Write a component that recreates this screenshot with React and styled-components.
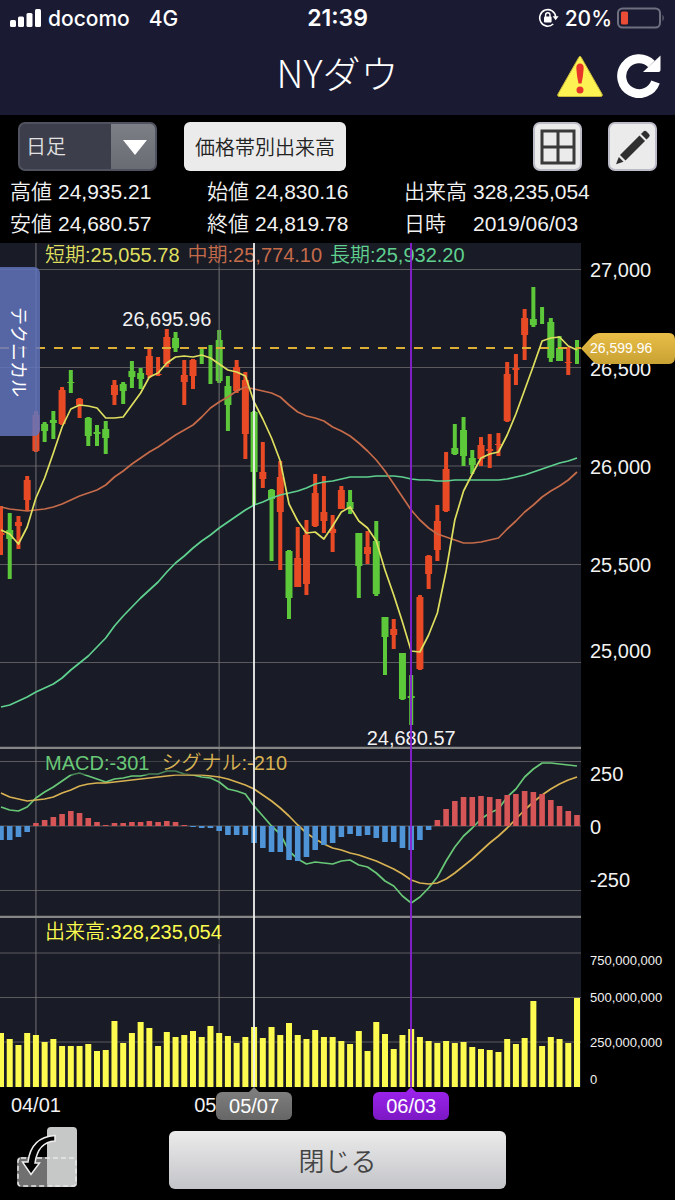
import React, { useState } from "react";
import styled, { createGlobalStyle } from "styled-components";

const color = {
  header: "#1a1b33",
  plot: "#191b26",
  grid: "#5b5b5e",
  divider: "#868686",
  up: "#e94a26",
  down: "#5cc83a",
  short: "#dfdf5f",
  mid: "#c66b4a",
  long: "#5fd08f",
  macd: "#68c877",
  signal: "#d8b252",
  plus: "#d65557",
  minus: "#4f94d6",
  volume: "#fdfb4f",
  current: "#dcae35",
  cursorA: "#f0f0f0",
  cursorB: "#8a1fd6",
};

const GlobalStyle = createGlobalStyle`
  * {
    box-sizing: border-box;
  }

  body {
    margin: 0;
    background: #000;
    color: #f2f2f2;
    font-family: "Liberation Sans", "Noto Sans CJK JP", sans-serif;
    font-size: 20px;
    font-weight: 350;
  }

  button,
  select {
    font: inherit;
    margin: 0;
    cursor: pointer;
  }

  svg {
    display: block;
  }
`;

/*
 * plot data - y values share one vertical axis that runs through all panes
 */

const COUNT = 67;
const PLOT_WIDTH = 581;
const STEP = (PLOT_WIDTH - 5) / (COUNT - 1);
const xOf = (i) => 1 + i * STEP;
const percentOf = (i) => `${(xOf(i) / PLOT_WIDTH) * 100}%`;

// [direction, high, body top, body bottom, low]
const candles = [
  ["u", 506, 533, 535, 555], ["d", 513, 530, 539, 579], ["u", 516, 522, 526, 549],
  ["u", 476, 480, 500, 511], ["u", 411, 415, 451, 452], ["d", 422, 424, 431, 442],
  ["d", 411, 420, 423, 439], ["u", 387, 390, 424, 425], ["d", 370, 382, 383, 393],
  ["u", 398, 399, 405, 418], ["d", 417, 418, 436, 446], ["d", 425, 432, 434, 446],
  ["d", 421, 429, 438, 454], ["u", 380, 385, 395, 405], ["d", 382, 384, 391, 404],
  ["d", 361, 371, 377, 388], ["d", 368, 373, 379, 389], ["u", 348, 356, 375, 378],
  ["u", 357, 374, 375, 376], ["u", 329, 337, 364, 367], ["d", 332, 338, 348, 352],
  ["u", 360, 375, 382, 405], ["u", 359, 360, 376, 389], ["d", 348, 349, 349, 364],
  ["d", 345, 349, 349, 384], ["d", 330, 340, 381, 383], ["d", 376, 386, 405, 431],
  ["u", 360, 367, 391, 393], ["u", 372, 380, 434, 459], ["d", 411, 412, 472, 505],
  ["u", 442, 472, 479, 488], ["d", 489, 490, 499, 561], ["u", 461, 477, 512, 570],
  ["d", 550, 551, 598, 619], ["u", 527, 558, 587, 587], ["u", 520, 535, 584, 595],
  ["u", 474, 493, 526, 527], ["u", 476, 512, 521, 533], ["u", 515, 529, 533, 552],
  ["u", 486, 490, 509, 509], ["d", 490, 502, 509, 514], ["d", 533, 533, 566, 598],
  ["u", 531, 547, 554, 564], ["d", 521, 541, 594, 596], ["d", 617, 617, 637, 675],
  ["u", 619, 629, 635, 649], ["d", 653, 653, 699, 700], ["d", 675, 696, 698, 725],
  ["u", 595, 597, 669, 670], ["u", 555, 556, 574, 589], ["u", 505, 521, 550, 561],
  ["u", 452, 469, 511, 512], ["d", 424, 448, 454, 455], ["d", 417, 430, 456, 466],
  ["d", 450, 458, 465, 474], ["u", 437, 445, 459, 466], ["u", 434, 449, 451, 468],
  ["u", 433, 444, 445, 456], ["u", 362, 374, 421, 422], ["u", 354, 368, 370, 385],
  ["u", 309, 318, 335, 360], ["d", 287, 319, 325, 327], ["d", 307, 323, 323, 324],
  ["d", 318, 322, 358, 362], ["d", 336, 348, 361, 361], ["u", 347, 362, 363, 375],
  ["d", 340, 348, 348, 364],
];

const shortLine = [
  530, 534, 544, 527, 498, 478, 453, 427, 409, 405, 406, 408, 418, 418, 417, 405,
  393, 377, 373, 363, 357, 356, 357, 355, 358, 364, 370, 372, 376, 402, 419, 438,
  461, 504, 521, 533, 532, 539, 526, 512, 507, 521, 528, 541, 570, 595, 622, 651,
  652, 635, 613, 571, 520, 491, 474, 458, 454, 452, 435, 414, 390, 366, 341, 338,
  337, 346, 350,
];

const midLine = [
  507, 509, 510, 511, 510, 509, 507, 504, 500, 496, 493, 490, 485, 477, 471, 464,
  458, 452, 447, 441, 435, 430, 425, 417, 408, 402, 397, 391, 387, 389, 391, 393,
  397, 405, 412, 416, 418, 421, 427, 431, 436, 443, 451, 460, 471, 484, 497, 510,
  520, 528, 534, 537, 540, 543, 543, 542, 540, 538, 529, 521, 512, 505, 497, 491,
  486, 480, 472,
];

const longLine = [
  707, 705, 701, 697, 692, 688, 684, 678, 670, 663, 656, 647, 638, 626, 616, 607,
  598, 590, 582, 572, 563, 556, 548, 541, 535, 528, 522, 516, 510, 505, 502, 498,
  495, 493, 491, 488, 484, 482, 481, 479, 477, 477, 477, 476, 476, 476, 477, 479,
  480, 480, 481, 481, 480, 480, 480, 480, 480, 480, 479, 477, 475, 472, 469, 466,
  463, 461, 458,
];

const macdLine = [
  807, 810, 811, 807, 798, 792, 787, 781, 775, 773, 776, 779, 782, 779, 778, 776,
  776, 774, 774, 771, 771, 774, 775, 777, 778, 782, 789, 791, 794, 806, 816, 826,
  834, 851, 859, 864, 862, 863, 864, 861, 860, 865, 867, 873, 881, 886, 896, 903,
  897, 888, 877, 861, 847, 836, 828, 819, 813, 809, 797, 789, 777, 769, 763, 763,
  764, 765, 766,
];

const signalLine = [
  793, 797, 799, 801, 800, 799, 797, 793, 790, 786, 784, 783, 783, 782, 781, 780,
  779, 778, 777, 776, 775, 775, 775, 775, 776, 777, 779, 782, 785, 789, 795, 801,
  808, 816, 825, 833, 839, 844, 848, 850, 853, 855, 858, 861, 865, 869, 874, 880,
  883, 884, 883, 879, 873, 866, 859, 851, 843, 836, 828, 819, 810, 802, 795, 789,
  784, 780, 777,
];

const histogram = [
  -14, -14, -11, -6, 3, 6, 9, 12, 15, 13, 8, 4, 1, 3, 3, 4, 4, 5, 4, 5, 4, 1, -1,
  -2, -2, -5, -9, -9, -9, -17, -22, -26, -26, -34, -35, -31, -24, -19, -17, -11,
  -8, -10, -9, -12, -16, -16, -22, -24, -14, -4, 6, 17, 25, 29, 29, 30, 29, 27,
  31, 32, 35, 34, 32, 26, 20, 15, 11,
];

const volumes = [
  54, 48, 42, 54, 52, 45, 48, 41, 41, 41, 43, 36, 37, 66, 44, 54, 65, 59, 41, 55,
  50, 52, 56, 50, 61, 54, 51, 44, 50, 60, 49, 60, 52, 64, 52, 48, 57, 50, 50, 46,
  43, 56, 36, 65, 53, 38, 52, 58, 50, 46, 44, 46, 44, 45, 40, 38, 37, 35, 48, 43,
  49, 86, 41, 50, 48, 44, 89,
];

const quotes = [
  ["高値", "24,935.21"],
  ["始値", "24,830.16"],
  ["出来高", "328,235,054"],
  ["安値", "24,680.57"],
  ["終値", "24,819.78"],
  ["日時", "2019/06/03"],
];

const monthLines = [
  { index: 4, label: "04/01" },
  { index: 25, label: "05/01" },
];

const cursors = [
  { index: 29, label: "05/07", line: color.cursorA, from: "#7d7d7d", to: "#666" },
  { index: 47, label: "06/03", line: color.cursorB, from: "#9a22ea", to: "#7c18c4" },
];

/*
 * header
 */

const Page = styled.div`
  min-height: 100vh;
  display: flex;
  flex-direction: column;
`;

const Header = styled.header`
  background: ${color.header};
  height: 115px;
`;

const StatusBar = styled.div`
  display: grid;
  grid-template-columns: 1fr auto 1fr;
  align-items: center;
  height: 36px;
  padding: 0 10px;
  color: #fff;
  font-family: Inter, sans-serif;
  font-size: 21px;
  font-weight: 500;
`;

const StatusGroup = styled.div`
  display: flex;
  align-items: center;
  justify-content: ${({ $end }) => ($end ? "flex-end" : "flex-start")};
  gap: ${({ $end }) => ($end ? "5px" : "7px")};
`;

const Network = styled.span`
  margin-left: 12px;
`;

const Clock = styled.span`
  font-size: 23px;
  font-weight: 600;
`;

const TitleBar = styled.div`
  display: grid;
  grid-template-columns: 1fr auto 1fr;
  align-items: center;
  height: 79px;
  padding: 0 14px;
`;

const Title = styled.h1`
  grid-column: 2;
  margin: 0;
  padding-bottom: 8px;
  color: #fff;
  font-family: "Noto Sans CJK JP", sans-serif;
  font-size: 38px;
  font-weight: 300;
  line-height: 44px;
`;

const TitleActions = styled.div`
  display: flex;
  justify-content: flex-end;
  gap: 14px;
`;

const IconButton = styled.button`
  padding: 0;
  border: none;
  background: none;
`;

/*
 * toolbar and quotes
 */

const Toolbar = styled.div`
  display: flex;
  align-items: center;
  gap: 27px;
  padding: 7px 18px 5px;
`;

const SelectBox = styled.div`
  position: relative;
  width: 139px;
`;

const PeriodSelect = styled.select`
  appearance: none;
  width: 100%;
  height: 49px;
  padding: 0 6px;
  border: 2px solid #50525f;
  border-radius: 7px;
  background: linear-gradient(90deg, #3d3e4b 91px, transparent 91px),
    linear-gradient(#7d7f87, #6a6c74);
  color: #e0e0e0;
`;

const SelectArrow = styled.svg`
  position: absolute;
  top: 18px;
  right: 10px;
  pointer-events: none;
`;

const LightButton = styled.button`
  height: 49px;
  padding: 0 11px;
  border: none;
  border-radius: 6px;
  background: #ebebeb;
  color: #222;
`;

const ToolGroup = styled.div`
  display: flex;
  gap: 26px;
  margin-left: auto;
`;

const ToolButton = styled.button`
  display: flex;
  align-items: center;
  justify-content: center;
  width: 49px;
  height: 49px;
  padding: 0;
  border: 2px solid #bcbcc8;
  border-radius: 7px;
  background: #ebebeb;
`;

const QuoteGrid = styled.dl`
  display: grid;
  grid-template-columns: repeat(3, 197px);
  margin: 0;
  padding: 0 10px 3px;
  font-size: 21px;
  line-height: 32px;
`;

const Quote = styled.div`
  display: flex;
  gap: 6px;
  white-space: nowrap;

  &:nth-child(3n) dt {
    width: 63px;
  }

  dd {
    margin: 0;
  }
`;

/*
 * chart
 */

const Chart = styled.main`
  position: relative;
  display: grid;
  grid-template-columns: 1fr 94px;
`;

const Plot = styled.div`
  position: relative;
`;

const Pane = styled.section`
  position: relative;
  height: ${({ $height }) => $height}px;
  background: ${color.plot};

  > svg {
    width: 100%;
    height: 100%;
  }
`;

const Legend = styled.div`
  position: absolute;
  top: ${({ $top }) => $top}px;
  left: 45px;
  display: flex;
  gap: ${({ $gap }) => $gap}px;
  line-height: 24px;
  white-space: nowrap;
  background: rgba(25, 27, 38, 0.4);
`;

const LegendItem = styled.span`
  color: ${({ $color }) => $color};
`;

const PointLabel = styled.span`
  position: absolute;
  top: ${({ $top }) => $top}px;
  line-height: 24px;
  transform: translateX(-50%);
`;

const CursorLine = styled.div`
  position: absolute;
  top: 0;
  bottom: 0;
  width: 2px;
  margin-left: -1px;
  background: ${({ $color }) => $color};
  opacity: 0.9;
`;

const TechnicalTab = styled.button`
  position: absolute;
  top: 24px;
  left: 0;
  width: 40px;
  height: 169px;
  padding: 0;
  border: none;
  border-radius: 0 6px 6px 0;
  background: rgba(98, 115, 188, 0.84);
  color: #fff;
  font-size: 18px;
  font-weight: 400;
  writing-mode: vertical-rl;
  text-orientation: sideways;
`;

const Axis = styled.div`
  height: ${({ $height }) => $height}px;
  padding: ${({ $top }) => $top}px 0 0 9px;
  font-size: ${({ $small }) => ($small ? "13px" : "20px")};
  line-height: ${({ $small }) => ($small ? "16px" : "24px")};
`;

const Tick = styled.div`
  margin-top: ${({ $space }) => $space}px;
`;

const CurrentPrice = styled.div`
  position: absolute;
  top: 90px;
  right: 0;
  width: 94px;
  height: 31px;
  padding-left: 9px;
  color: #fff;
  font-size: 14px;
  line-height: 31px;

  svg {
    position: absolute;
    inset: 0;
  }

  span {
    position: relative;
  }
`;

const DateAxis = styled.div`
  position: relative;
  height: 38px;
`;

const DateLabel = styled.span`
  position: absolute;
  top: 6px;
  line-height: 24px;
  transform: translateX(-50%);
`;

const DateTag = styled.span`
  position: absolute;
  top: 5px;
  width: 76px;
  border-radius: 6px;
  background: linear-gradient(${({ $from }) => $from}, ${({ $to }) => $to});
  color: #fff;
  line-height: 28px;
  text-align: center;
  transform: translateX(-50%);

  &::before {
    content: "";
    position: absolute;
    top: -5px;
    left: 33px;
    border: 5px solid transparent;
    border-top: none;
    border-bottom-color: ${({ $from }) => $from};
  }
`;

/*
 * footer
 */

const Footer = styled.footer`
  display: grid;
  grid-template-columns: 1fr 50% 1fr;
  align-items: center;
  padding: 2px 0 10px;
`;

const FooterSide = styled.div`
  padding-left: 17px;
`;

const CloseButton = styled.button`
  height: 58px;
  border: none;
  border-radius: 6px;
  background: linear-gradient(#ebebeb, #c3c4c8);
  color: #444;
  font-size: 26px;
`;

const SignalIcon = () => (
  <svg width="31" height="18" viewBox="0 0 31 18" fill="#fff">
    <rect x="0" y="11" width="6" height="7" rx="1.5" />
    <rect x="8" y="7.5" width="6" height="10.5" rx="1.5" />
    <rect x="16.5" y="4" width="6" height="14" rx="1.5" />
    <rect x="25" y="0" width="6" height="18" rx="1.5" />
  </svg>
);

const RotationLockIcon = () => (
  <svg width="22" height="20" viewBox="0 0 22 20" fill="none" stroke="#fff">
    <path d="M17.7 9A8 8.3 0 1 0 15.2 16" strokeWidth="1.6" />
    <path d="M14.6 8.3h6l-3 4z" fill="#fff" stroke="none" />
    <rect x="6" y="8.6" width="7.6" height="5.8" rx="1" fill="#fff" stroke="none" />
    <path d="M7.6 9V7a2.2 2.2 0 0 1 4.4 0v2" strokeWidth="1.4" />
  </svg>
);

const BatteryIcon = () => (
  <svg width="48" height="22" viewBox="0 0 48 22">
    <rect x="1" y="1.5" width="42" height="19" rx="4.5" fill="none" stroke="#6e6f7f" strokeWidth="2" />
    <rect x="4" y="4.5" width="7" height="13" rx="1.5" fill="#ea4c35" />
    <path d="M45.5 7.5q2.5 3.5 0 7z" fill="#6e6f7f" />
  </svg>
);

const WarningIcon = () => (
  <svg width="46" height="44" viewBox="0 0 46 44">
    <path
      d="M21.8 3.4q1.2-2.4 2.4 0L45 40q1 2.5-1.2 2.5H2.2Q0 42.5 1 40z"
      fill="#fdf352"
      stroke="#c9b83c"
      strokeWidth="1"
    />
    <path d="M19.3 14q0-4.5 3.7-4.5t3.7 4.5q-.5 9-2.2 15.5h-3q-1.7-6.5-2.2-15.5z" fill="#e8352a" />
    <circle cx="23" cy="36" r="3.5" fill="#e8352a" />
  </svg>
);

const ReloadIcon = () => (
  <svg width="44" height="44" viewBox="0 0 44 44">
    <path d="M38.5 28A17.4 17.4 0 1 1 34.5 10" fill="none" stroke="#fff" strokeWidth="9" />
    <path d="M43.5 1.5V16q0 2-2 2H26z" fill="#fff" />
  </svg>
);

const GridIcon = () => (
  <svg width="36" height="36" viewBox="0 0 36 36" fill="none" stroke="#3a3a3a" strokeWidth="3">
    <rect x="2" y="2" width="32" height="32" />
    <path d="M18 2v32M2 18h32" />
  </svg>
);

const PencilIcon = () => (
  <svg width="36" height="36" viewBox="0 0 36 36" fill="#2f2f2f">
    <path d="M5 26 24.5 6.5l5.5 5.5L10.5 31.5z" />
    <path d="M26 5 28.5 2.5q1.5-1.5 3 0L34 5q1.5 1.5 0 3L31.5 10.5z" />
    <path d="M3.8 28 8.5 32.7 1 35.2z" />
  </svg>
);

const RotateIcon = () => (
  <svg width="60" height="60" viewBox="0 0 60 60">
    <rect x="0" y="30" width="60" height="30" rx="4" fill="#707070" />
    <rect x="30" y="0" width="30" height="60" rx="4" fill="#c6c8c7" />
    <rect
      x="1"
      y="31"
      width="58"
      height="28"
      rx="3"
      fill="none"
      stroke="#e8e8e8"
      strokeWidth="1.5"
      strokeDasharray="5 3"
    />
    <path
      d="M38 8.5V14Q21 15 18 36h4.5L14 47.5 5.5 35H11Q14 10 38 8.5z"
      fill="#000"
      stroke="#eee"
      strokeWidth="1.5"
    />
  </svg>
);

const toPoints = (values) => values.map((y, i) => `${xOf(i)},${y}`).join(" ");

const Line = ({ values, stroke }) => (
  <polyline
    points={toPoints(values)}
    fill="none"
    stroke={stroke}
    strokeWidth="1.7"
    strokeLinejoin="round"
  />
);

const GridRows = ({ rows }) =>
  rows.map((y) => (
    <line key={y} x1="0" x2={PLOT_WIDTH} y1={y} y2={y} stroke={color.grid} strokeWidth="1.2" />
  ));

const MonthGrid = ({ top, bottom }) =>
  monthLines.map(({ index }) => (
    <line
      key={index}
      x1={xOf(index)}
      x2={xOf(index)}
      y1={top}
      y2={bottom}
      stroke="#77777a"
      strokeOpacity="0.6"
      strokeWidth="1.6"
    />
  ));

const Divider = ({ y }) => (
  <line x1="0" x2={PLOT_WIDTH} y1={y} y2={y} stroke={color.divider} strokeWidth="2.5" />
);

const PricePane = () => (
  <Pane $height={506}>
    <svg viewBox={`0 243 ${PLOT_WIDTH} 506`} preserveAspectRatio="none">
      <GridRows rows={[269.5, 367.5, 466, 564.5, 662.5]} />
      {candles.map(([dir, high, top, bottom, low], i) => (
        <g key={i} fill={dir === "u" ? color.up : color.down}>
          <rect x={xOf(i) - 2} y={high} width="4" height={low - high} />
          <rect x={xOf(i) - 3.5} y={top} width="7" height={bottom - top} />
        </g>
      ))}
      <MonthGrid top={243} bottom={749} />
      <line
        x1="0"
        x2={PLOT_WIDTH}
        y1="348"
        y2="348"
        stroke={color.current}
        strokeWidth="1.8"
        strokeDasharray="9 9"
      />
      <Line values={longLine} stroke={color.long} />
      <Line values={midLine} stroke={color.mid} />
      <Line values={shortLine} stroke={color.short} />
      <Divider y={748} />
    </svg>
    <Legend $top={0} $gap={8}>
      <LegendItem $color={color.short}>短期:25,055.78</LegendItem>
      <LegendItem $color={color.mid}>中期:25,774.10</LegendItem>
      <LegendItem $color={color.long}>長期:25,932.20</LegendItem>
    </Legend>
    <PointLabel $top={64} style={{ left: percentOf(19) }}>
      26,695.96
    </PointLabel>
    <PointLabel $top={483} style={{ left: percentOf(47) }}>
      24,680.57
    </PointLabel>
  </Pane>
);

const MacdPane = () => (
  <Pane $height={169}>
    <svg viewBox={`0 749 ${PLOT_WIDTH} 169`} preserveAspectRatio="none">
      <GridRows rows={[761.5, 826, 890.5]} />
      <MonthGrid top={749} bottom={918} />
      <Line values={macdLine} stroke={color.macd} />
      <Line values={signalLine} stroke={color.signal} />
      {histogram.map((value, i) => (
        <rect
          key={i}
          x={xOf(i) - 2.8}
          y={value > 0 ? 826 - value : 826}
          width="5.6"
          height={Math.abs(value)}
          fill={value > 0 ? color.plus : color.minus}
        />
      ))}
      <Divider y={917} />
    </svg>
    <Legend $top={2} $gap={12}>
      <LegendItem $color={color.macd}>MACD:-301</LegendItem>
      <LegendItem $color={color.signal}>シグナル:-210</LegendItem>
    </Legend>
  </Pane>
);

const VolumePane = () => (
  <Pane $height={169}>
    <svg viewBox={`0 918 ${PLOT_WIDTH} 169`} preserveAspectRatio="none">
      <GridRows rows={[953, 997.5, 1042]} />
      <MonthGrid top={918} bottom={1087} />
      {volumes.map((value, i) => (
        <rect
          key={i}
          x={xOf(i) - 3}
          y={1087 - value}
          width="6"
          height={value}
          fill={color.volume}
        />
      ))}
    </svg>
    <Legend $top={2} $gap={0}>
      <LegendItem $color={color.volume}>出来高:328,235,054</LegendItem>
    </Legend>
  </Pane>
);

const App = () => {
  const [period, setPeriod] = useState("day");

  return (
    <>
      <GlobalStyle />
      <Page>
        <Header>
          <StatusBar>
            <StatusGroup>
              <SignalIcon />
              <span>docomo</span>
              <Network>4G</Network>
            </StatusGroup>
            <Clock>21:39</Clock>
            <StatusGroup $end>
              <RotationLockIcon />
              <span>20%</span>
              <BatteryIcon />
            </StatusGroup>
          </StatusBar>
          <TitleBar>
            <Title>NYダウ</Title>
            <TitleActions>
              <IconButton aria-label="警告">
                <WarningIcon />
              </IconButton>
              <IconButton aria-label="更新">
                <ReloadIcon />
              </IconButton>
            </TitleActions>
          </TitleBar>
        </Header>

        <Toolbar>
          <SelectBox>
            <PeriodSelect
              aria-label="足種"
              value={period}
              onChange={(e) => setPeriod(e.target.value)}
            >
              <option value="day">日足</option>
              <option value="week">週足</option>
              <option value="month">月足</option>
            </PeriodSelect>
            <SelectArrow width="24" height="15" viewBox="0 0 24 15">
              <path d="M0 0h24L12 15z" fill="#fff" />
            </SelectArrow>
          </SelectBox>
          <LightButton>価格帯別出来高</LightButton>
          <ToolGroup>
            <ToolButton aria-label="分割">
              <GridIcon />
            </ToolButton>
            <ToolButton aria-label="描画">
              <PencilIcon />
            </ToolButton>
          </ToolGroup>
        </Toolbar>

        <QuoteGrid>
          {quotes.map(([label, value]) => (
            <Quote key={label}>
              <dt>{label}</dt>
              <dd>{value}</dd>
            </Quote>
          ))}
        </QuoteGrid>

        <Chart>
          <Plot>
            <PricePane />
            <MacdPane />
            <VolumePane />
            {cursors.map(({ index, line }) => (
              <CursorLine key={index} $color={line} style={{ left: percentOf(index) }} />
            ))}
            <TechnicalTab>テクニカル</TechnicalTab>
          </Plot>
          <div>
            <Axis $height={506} $top={15}>
              <Tick $space={0}>27,000</Tick>
              <Tick $space={75}>26,500</Tick>
              <Tick $space={74}>26,000</Tick>
              <Tick $space={74}>25,500</Tick>
              <Tick $space={62}>25,000</Tick>
            </Axis>
            <Axis $height={169} $top={13}>
              <Tick $space={0}>250</Tick>
              <Tick $space={29}>0</Tick>
              <Tick $space={29}>-250</Tick>
            </Axis>
            <Axis $height={169} $top={35} $small>
              <Tick $space={0}>750,000,000</Tick>
              <Tick $space={21}>500,000,000</Tick>
              <Tick $space={29}>250,000,000</Tick>
              <Tick $space={21}>0</Tick>
            </Axis>
          </div>
          <DateAxis>
            {monthLines.map(({ index, label }) => (
              <DateLabel key={label} style={{ left: percentOf(index) }}>
                {label}
              </DateLabel>
            ))}
            {cursors.map(({ index, label, from, to }) => (
              <DateTag key={label} $from={from} $to={to} style={{ left: percentOf(index) }}>
                {label}
              </DateTag>
            ))}
          </DateAxis>
          <CurrentPrice>
            <svg width="94" height="31" viewBox="0 0 94 31">
              <defs>
                <linearGradient id="priceTag" x1="0" y1="0" x2="0" y2="1">
                  <stop offset="0" stopColor="#e9be48" />
                  <stop offset="1" stopColor="#c9a233" />
                </linearGradient>
              </defs>
              <path
                d="M0 15.5 11 3.5Q14 0 19 0H88Q94 0 94 7V24Q94 31 88 31H19Q14 31 11 27.5z"
                fill="url(#priceTag)"
              />
            </svg>
            <span>26,599.96</span>
          </CurrentPrice>
        </Chart>

        <Footer>
          <FooterSide>
            <IconButton aria-label="画面回転">
              <RotateIcon />
            </IconButton>
          </FooterSide>
          <CloseButton>閉じる</CloseButton>
        </Footer>
      </Page>
    </>
  );
};

export default App;
